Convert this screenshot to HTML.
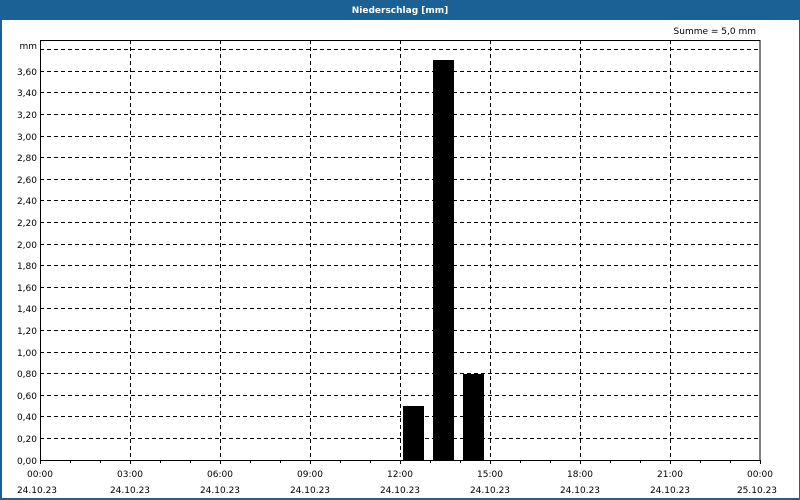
<!DOCTYPE html>
<html><head><meta charset="utf-8"><style>
html,body{margin:0;padding:0;background:#fff}
svg{display:block}
text{font-family:"DejaVu Sans","Liberation Sans",sans-serif;font-size:9px;fill:#000}
</style></head><body>
<svg width="800" height="500" xmlns="http://www.w3.org/2000/svg">
<rect x="0" y="0" width="800" height="500" fill="#1b6196"/>
<rect x="2" y="20" width="797" height="478" fill="#fff"/>
<text x="400" y="13" text-anchor="middle" style="fill:#fff;font-weight:bold">Niederschlag [mm]</text>
<text x="756" y="34" text-anchor="end">Summe = 5,0 mm</text>
<g stroke="#000" stroke-width="1" stroke-dasharray="4,3" shape-rendering="crispEdges">
<line x1="40" x2="760" y1="49.5" y2="49.5"/><line x1="40" x2="760" y1="71.5" y2="71.5"/>
<line x1="40" x2="760" y1="92.5" y2="92.5"/><line x1="40" x2="760" y1="114.5" y2="114.5"/>
<line x1="40" x2="760" y1="136.5" y2="136.5"/><line x1="40" x2="760" y1="157.5" y2="157.5"/>
<line x1="40" x2="760" y1="179.5" y2="179.5"/><line x1="40" x2="760" y1="200.5" y2="200.5"/>
<line x1="40" x2="760" y1="222.5" y2="222.5"/><line x1="40" x2="760" y1="244.5" y2="244.5"/>
<line x1="40" x2="760" y1="265.5" y2="265.5"/><line x1="40" x2="760" y1="287.5" y2="287.5"/>
<line x1="40" x2="760" y1="308.5" y2="308.5"/><line x1="40" x2="760" y1="330.5" y2="330.5"/>
<line x1="40" x2="760" y1="352.5" y2="352.5"/><line x1="40" x2="760" y1="373.5" y2="373.5"/>
<line x1="40" x2="760" y1="395.5" y2="395.5"/><line x1="40" x2="760" y1="416.5" y2="416.5"/>
<line x1="40" x2="760" y1="438.5" y2="438.5"/>
<line x1="130.5" x2="130.5" y1="40" y2="460"/><line x1="220.5" x2="220.5" y1="40" y2="460"/>
<line x1="310.5" x2="310.5" y1="40" y2="460"/><line x1="400.5" x2="400.5" y1="40" y2="460"/>
<line x1="490.5" x2="490.5" y1="40" y2="460"/><line x1="580.5" x2="580.5" y1="40" y2="460"/>
<line x1="670.5" x2="670.5" y1="40" y2="460"/>
</g>
<g fill="#000" shape-rendering="crispEdges">
<rect x="403" y="406" width="21" height="54"/>
<rect x="433" y="60" width="21" height="400"/>
<rect x="463" y="374" width="21" height="86"/>
</g>
<g stroke="#000" stroke-width="1" fill="none" shape-rendering="crispEdges">
<rect x="40.5" y="40.5" width="719.5" height="420"/>
<path d="M40.5 460v4M70.5 460v3M100.5 460v3M130.5 460v4M160.5 460v3M190.5 460v3M220.5 460v4M250.5 460v3M280.5 460v3M310.5 460v4M340.5 460v3M370.5 460v3M400.5 460v4M430.5 460v3M460.5 460v3M490.5 460v4M520.5 460v3M550.5 460v3M580.5 460v4M610.5 460v3M640.5 460v3M670.5 460v4M700.5 460v3M730.5 460v3M760.5 460v4"/>
</g>
<g text-anchor="end">
<text x="37" y="49">mm</text>
<text x="37" y="75">3,60</text><text x="37" y="96">3,40</text><text x="37" y="118">3,20</text>
<text x="37" y="140">3,00</text><text x="37" y="161">2,80</text><text x="37" y="183">2,60</text>
<text x="37" y="204">2,40</text><text x="37" y="226">2,20</text><text x="37" y="248">2,00</text>
<text x="37" y="269">1,80</text><text x="37" y="291">1,60</text><text x="37" y="312">1,40</text>
<text x="37" y="334">1,20</text><text x="37" y="356">1,00</text><text x="37" y="377">0,80</text>
<text x="37" y="399">0,60</text><text x="37" y="420">0,40</text><text x="37" y="442">0,20</text>
<text x="37" y="464">0,00</text>
</g>
<g text-anchor="middle">
<text x="40" y="477">00:00</text><text x="130" y="477">03:00</text><text x="220" y="477">06:00</text>
<text x="310" y="477">09:00</text><text x="400" y="477">12:00</text><text x="490" y="477">15:00</text>
<text x="580" y="477">18:00</text><text x="670" y="477">21:00</text><text x="760" y="477">00:00</text>
<text x="37" y="493">24.10.23</text><text x="130" y="493">24.10.23</text><text x="220" y="493">24.10.23</text>
<text x="310" y="493">24.10.23</text><text x="400" y="493">24.10.23</text><text x="490" y="493">24.10.23</text>
<text x="580" y="493">24.10.23</text><text x="670" y="493">24.10.23</text><text x="757" y="493">25.10.23</text>
</g>
</svg>
</body></html>
